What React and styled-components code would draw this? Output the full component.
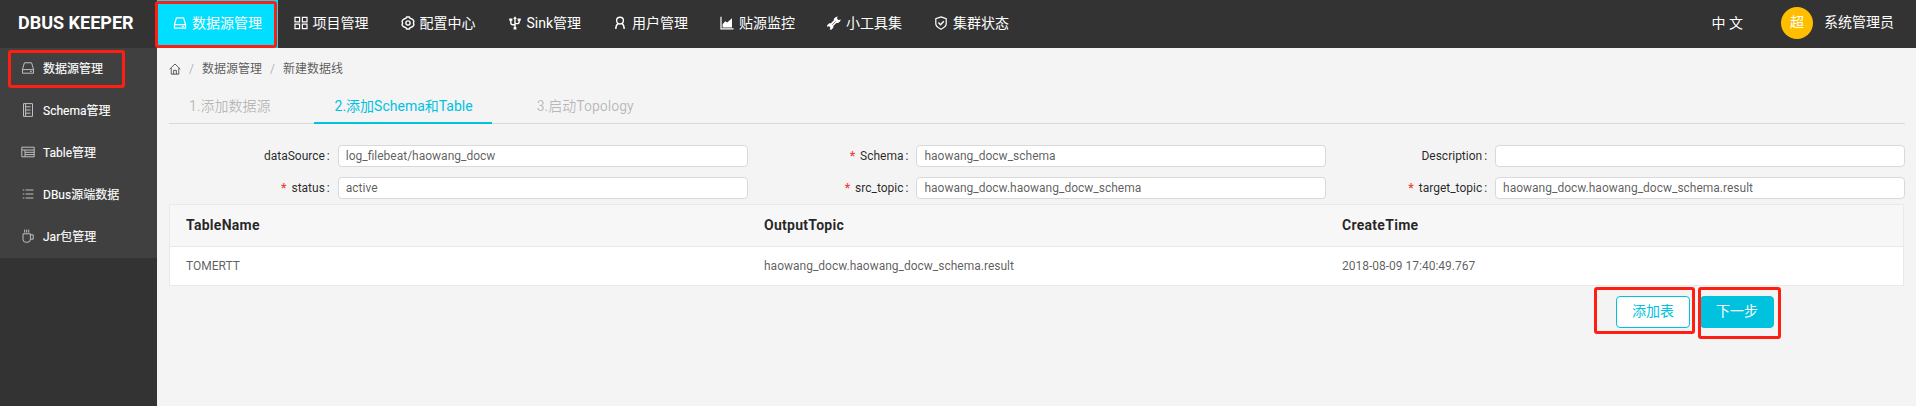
import React from "react";
import styled, { createGlobalStyle } from "styled-components";

const CYAN = "#00c1de";
const FONT = 'Roboto, "Noto Sans CJK SC", sans-serif';

const GlobalStyle = createGlobalStyle`
  * { box-sizing: border-box; }
  body { margin: 0; background: #f4f4f4; font-family: ${FONT}; font-size: 12px; color: rgba(0, 0, 0, 0.65); }
  #root { height: 100vh; overflow: hidden; }
`;

const Page = styled.div`
  position: relative;
  display: flex;
  flex-direction: column;
  height: 100vh;
`;

const Header = styled.header`
  display: flex;
  flex: none;
  height: 48px;
  background: #333;
  color: #fff;
  font-size: 14px;
  line-height: 46px;
`;

const Logo = styled.div`
  width: 157px;
  padding-left: 18px;
  font-size: 18px;
  font-weight: 700;
  white-space: nowrap;
`;

const Nav = styled.nav`
  display: flex;
  flex: 1;
`;

const NavItem = styled.a`
  display: flex;
  align-items: center;
  gap: 5px;
  height: 48px;
  padding: 0 16px 2px;
  white-space: nowrap;
  background: ${(p) => (p.$active ? "#00dfff" : "transparent")};

  &:first-child { width: 120.5px; }
`;

const UserArea = styled.div`
  display: flex;
  align-items: center;
  padding: 0 22px 2px 0;
`;

const Language = styled.span`
  margin-right: 38px;
`;

const Avatar = styled.span`
  width: 32px;
  height: 32px;
  margin-right: 11px;
  border-radius: 50%;
  background: #ffbf00;
  text-align: center;
  line-height: 30px;
`;

const UserName = styled.span`
  height: 46px;
  line-height: 44px;
`;

const Body = styled.div`
  display: flex;
  flex: 1;
`;

const Sidebar = styled.aside`
  flex: none;
  width: 157px;
  background: #333;
`;

const SideItem = styled.a`
  display: flex;
  align-items: center;
  gap: 8px;
  height: 42px;
  padding: 0 0 3px 21px;
  background: #404040;
  color: #fff;
  -webkit-text-stroke: 0.12px currentColor;

  svg { color: #bfbfbf; }
`;

const Main = styled.main`
  flex: 1;
  min-width: 0;
  padding: 12px 11px 0 12px;
`;

const Breadcrumb = styled.div`
  display: flex;
  align-items: center;
  height: 18px;
  line-height: 18px;
`;

const Separator = styled.span`
  width: 21px;
  text-align: center;
  color: rgba(0, 0, 0, 0.3);
`;

const Tabs = styled.div`
  display: flex;
  height: 34px;
  margin: 12px 0 21px;
  border-bottom: 1px solid #d9d9d9;
  font-size: 14px;
  line-height: 32px;
`;

const Tab = styled.div`
  height: 34px;
  margin-right: ${(p) => (p.$active ? 25 : 23)}px;
  padding: 0 ${(p) => (p.$active ? "19px 0 21px" : "20px")};
  white-space: nowrap;
  color: ${(p) => (p.$active ? CYAN : "rgba(0, 0, 0, 0.25)")};
  border-bottom: 2px solid ${(p) => (p.$active ? CYAN : "transparent")};
`;

const Form = styled.form`
  display: grid;
  grid-template-columns: repeat(3, 1fr);
  row-gap: 10px;
`;

const Field = styled.label`
  display: grid;
  grid-template-columns: 7fr 17fr;
  height: 22px;
  line-height: 22px;
`;

const FieldLabel = styled.span`
  text-align: right;
  color: rgba(0, 0, 0, 0.85);
  padding-right: 8px;

  &::before {
    content: "${(p) => (p.$required ? "*" : "")}";
    margin-right: 5px;
    color: #f04134;
    font-weight: 700;
  }
  &::after { content: ":"; margin-left: 2px; }
`;

const Input = styled.input`
  width: 100%;
  height: 22px;
  padding: 0 7px;
  border: 1px solid #d9d9d9;
  border-radius: 4px;
  background: #fff;
  color: rgba(0, 0, 0, 0.65);
  font: 12px ${FONT};
  outline: none;
`;

const Table = styled.div`
  width: 1735px;
  margin-top: 5px;
  border: 1px solid #e9e9e9;
  background: #fff;
`;

const TableRow = styled.div`
  display: grid;
  grid-template-columns: repeat(3, 578px);
  height: ${(p) => (p.$head ? 42 : 38)}px;
  line-height: ${(p) => (p.$head ? 41 : 38)}px;
  background: ${(p) => (p.$head ? "#f7f7f7" : "#fff")};
  border-bottom: ${(p) => (p.$head ? "1px solid #e9e9e9" : "none")};
  color: ${(p) => (p.$head ? "rgba(0, 0, 0, 0.85)" : "inherit")};
  font-size: ${(p) => (p.$head ? 14 : 12)}px;
  font-weight: ${(p) => (p.$head ? 700 : 400)};
  letter-spacing: ${(p) => (p.$head ? "0.28px" : "normal")};
`;

const Cell = styled.span`
  padding-left: 16px;
`;

const Actions = styled.div`
  display: flex;
  justify-content: flex-end;
  gap: 10px;
  padding: 10px 131px 0 0;
`;

const Button = styled.button`
  width: 74px;
  height: 32px;
  padding: 0 0 5px;
  border: 1px solid ${CYAN};
  border-radius: 4px;
  background: ${(p) => (p.$primary ? CYAN : "#fff")};
  color: ${(p) => (p.$primary ? "#fff" : CYAN)};
  font: 14px ${FONT};
`;

const Highlight = styled.div`
  position: absolute;
  left: ${(p) => p.$x}px;
  top: ${(p) => p.$y}px;
  width: ${(p) => p.$w}px;
  height: ${(p) => p.$h}px;
  border: 3px solid #ff1f12;
  border-radius: 3px;
  pointer-events: none;
`;

const Svg = styled.svg`
  flex: none;
  display: block;
  fill: none;
  stroke: currentColor;
  stroke-width: ${(p) => p.$stroke || 1.2};
`;

const shapes = {
  hdd: <><path d="M3.4 1.8h7.2l1.9 6.6v3.8H1.5V8.4z" /><path d="M1.5 8.6h11M9 10.4h1.8" /></>,
  grid: <path d="M1 1.4h4.6v4.4H1zM8.4 1.4H13v4.4H8.4zM1 8.2h4.6v4.4H1zM8.4 8.2H13v4.4H8.4z" />,
  gear: <><path strokeWidth="1.4" strokeLinejoin="round" d="M5.5 1h3l.6 1.4 1.9.6 1.5 1.3.4 1.4-.6 1.3.6 1.3-.4 1.4-1.5 1.3-1.9.6-.6 1.4h-3l-.6-1.4-1.9-.6-1.5-1.3-.4-1.4.6-1.3-.6-1.3.4-1.4L3 3l1.9-.6z" /><circle cx="7" cy="7" r="2.1" strokeWidth="1.4" /></>,
  usb: <><path strokeWidth="1.4" d="M7 2v10M2.8 4v2.6q0 2.2 2 2.2H7M11.2 4v1.4q0 2.2-2 2.2H7" /><path fill="currentColor" stroke="none" d="M7 .3l1.8 2.6H5.2zM1.2 2.6h3.2v2.2H1.2zM9.6 2.6h3.2v2.2H9.6zM5.6 11h2.8v2.6H5.6z" /></>,
  user: <><circle cx="7" cy="4.6" r="3.4" strokeWidth="1.4" /><path strokeWidth="1.4" d="M5.2 7.4Q2.8 9 2.8 13M8.8 7.4q2.4 1.6 2.4 5.6" /></>,
  chart: <><path d="M1 .8v12h12.6" /><path fill="currentColor" stroke="none" d="M2.6 11.4V8.2l2.6-3 2 1.4 4.8-4.4v9.2z" /></>,
  tool: <>
    <path fill="currentColor" stroke="none" d="M8.6 1.2l1.9-.9-.4 2.4 1.2 1.2 2.5-.5-.8 2-2 1.6-1.6-.1-3.1 3 .1 1.7-1.7 1.8-2 .4.6-2.4-1.2-1.2-2.4.7.7-2 1.8-1.7 1.7.1 3-3.1-.1-1.5z" />
    <path stroke="#333" strokeWidth=".6" d="M5.2 8.8l3.6-3.6" />
  </>,
  safety: <><path d="M7 .9l5.2 1.7v5.2q0 3-5.2 5.4-5.2-2.4-5.2-5.4V2.6z" /><path strokeWidth="1.4" d="M4.4 6.6l2.1 2.1 3.3-3.4" /></>,
  home: <path d="M.8 7.2L7 1.2l6.2 6M2.6 6v7h8.8V6M5.4 13V8.6h3.2V13" />,
  schema: <path d="M2.5.6h9v12.8h-9zM4.6 1v12M4.6 3.8h5M4.6 7h5M4.6 10.2h5" />,
  table: <path d="M.8 2.2h12.4v9.6H.8zM.8 5h12.4M4 5v6.8M4 7.3h9.2M4 9.6h9.2" />,
  list: <path d="M4.6 3h7.8M4.6 7h7.8M4.6 11h7.8M1.8 3h1.5M1.8 7h1.5M1.8 11h1.5" />,
  cup: <path d="M2 4.8h7.4v5.4q0 3-2.6 3H4.6q-2.6 0-2.6-3zM9.4 5.8h2.8v4.4H9.4M3.7.6v3M5.7.6v3M7.7.6v3" />,
};

const Icon = ({ name, size = 14, stroke }) => (
  <Svg viewBox="0 0 14 14" width={size} height={size} $stroke={stroke}>{shapes[name]}</Svg>
);

const navItems = [
  ["hdd", "数据源管理"], ["grid", "项目管理"], ["gear", "配置中心"], ["usb", "Sink管理"],
  ["user", "用户管理"], ["chart", "贴源监控"], ["tool", "小工具集"], ["safety", "集群状态"],
];

const sideItems = [
  ["hdd", "数据源管理"], ["schema", "Schema管理"], ["table", "Table管理"],
  ["list", "DBus源端数据"], ["cup", "Jar包管理"],
];

const fields = [
  ["dataSource", "log_filebeat/haowang_docw", false],
  ["Schema", "haowang_docw_schema", true],
  ["Description", "", false],
  ["status", "active", true],
  ["src_topic", "haowang_docw.haowang_docw_schema", true],
  ["target_topic", "haowang_docw.haowang_docw_schema.result", true],
];

const highlights = [[155, 1, 122, 47], [8, 50, 117, 38], [1594, 287, 101, 47], [1698, 287, 83, 52]];

export default function App() {
  return (
    <Page>
      <GlobalStyle />
      <Header>
        <Logo>DBUS KEEPER</Logo>
        <Nav>
          {navItems.map(([icon, text], i) => (
            <NavItem key={text} $active={i === 0}><Icon name={icon} />{text}</NavItem>
          ))}
        </Nav>
        <UserArea>
          <Language>中 文</Language>
          <Avatar>超</Avatar>
          <UserName>系统管理员</UserName>
        </UserArea>
      </Header>
      <Body>
        <Sidebar>
          {sideItems.map(([icon, text]) => (
            <SideItem key={text}><Icon name={icon} stroke={1} />{text}</SideItem>
          ))}
        </Sidebar>
        <Main>
          <Breadcrumb>
            <Icon name="home" size={12} stroke={1.1} />
            <Separator>/</Separator>
            <span>数据源管理</span>
            <Separator>/</Separator>
            <span>新建数据线</span>
          </Breadcrumb>
          <Tabs>
            <Tab>1.添加数据源</Tab>
            <Tab $active>2.添加Schema和Table</Tab>
            <Tab>3.启动Topology</Tab>
          </Tabs>
          <Form>
            {fields.map(([label, value, required]) => (
              <Field key={label}>
                <FieldLabel $required={required}>{label}</FieldLabel>
                <Input defaultValue={value} />
              </Field>
            ))}
          </Form>
          <Table>
            <TableRow $head><Cell>TableName</Cell><Cell>OutputTopic</Cell><Cell>CreateTime</Cell></TableRow>
            <TableRow>
              <Cell>TOMERTT</Cell>
              <Cell>haowang_docw.haowang_docw_schema.result</Cell>
              <Cell>2018-08-09 17:40:49.767</Cell>
            </TableRow>
          </Table>
          <Actions>
            <Button>添加表</Button>
            <Button $primary>下一步</Button>
          </Actions>
        </Main>
      </Body>
      {highlights.map(([x, y, w, h]) => (
        <Highlight key={`${x}-${y}`} $x={x} $y={y} $w={w} $h={h} />
      ))}
    </Page>
  );
}
